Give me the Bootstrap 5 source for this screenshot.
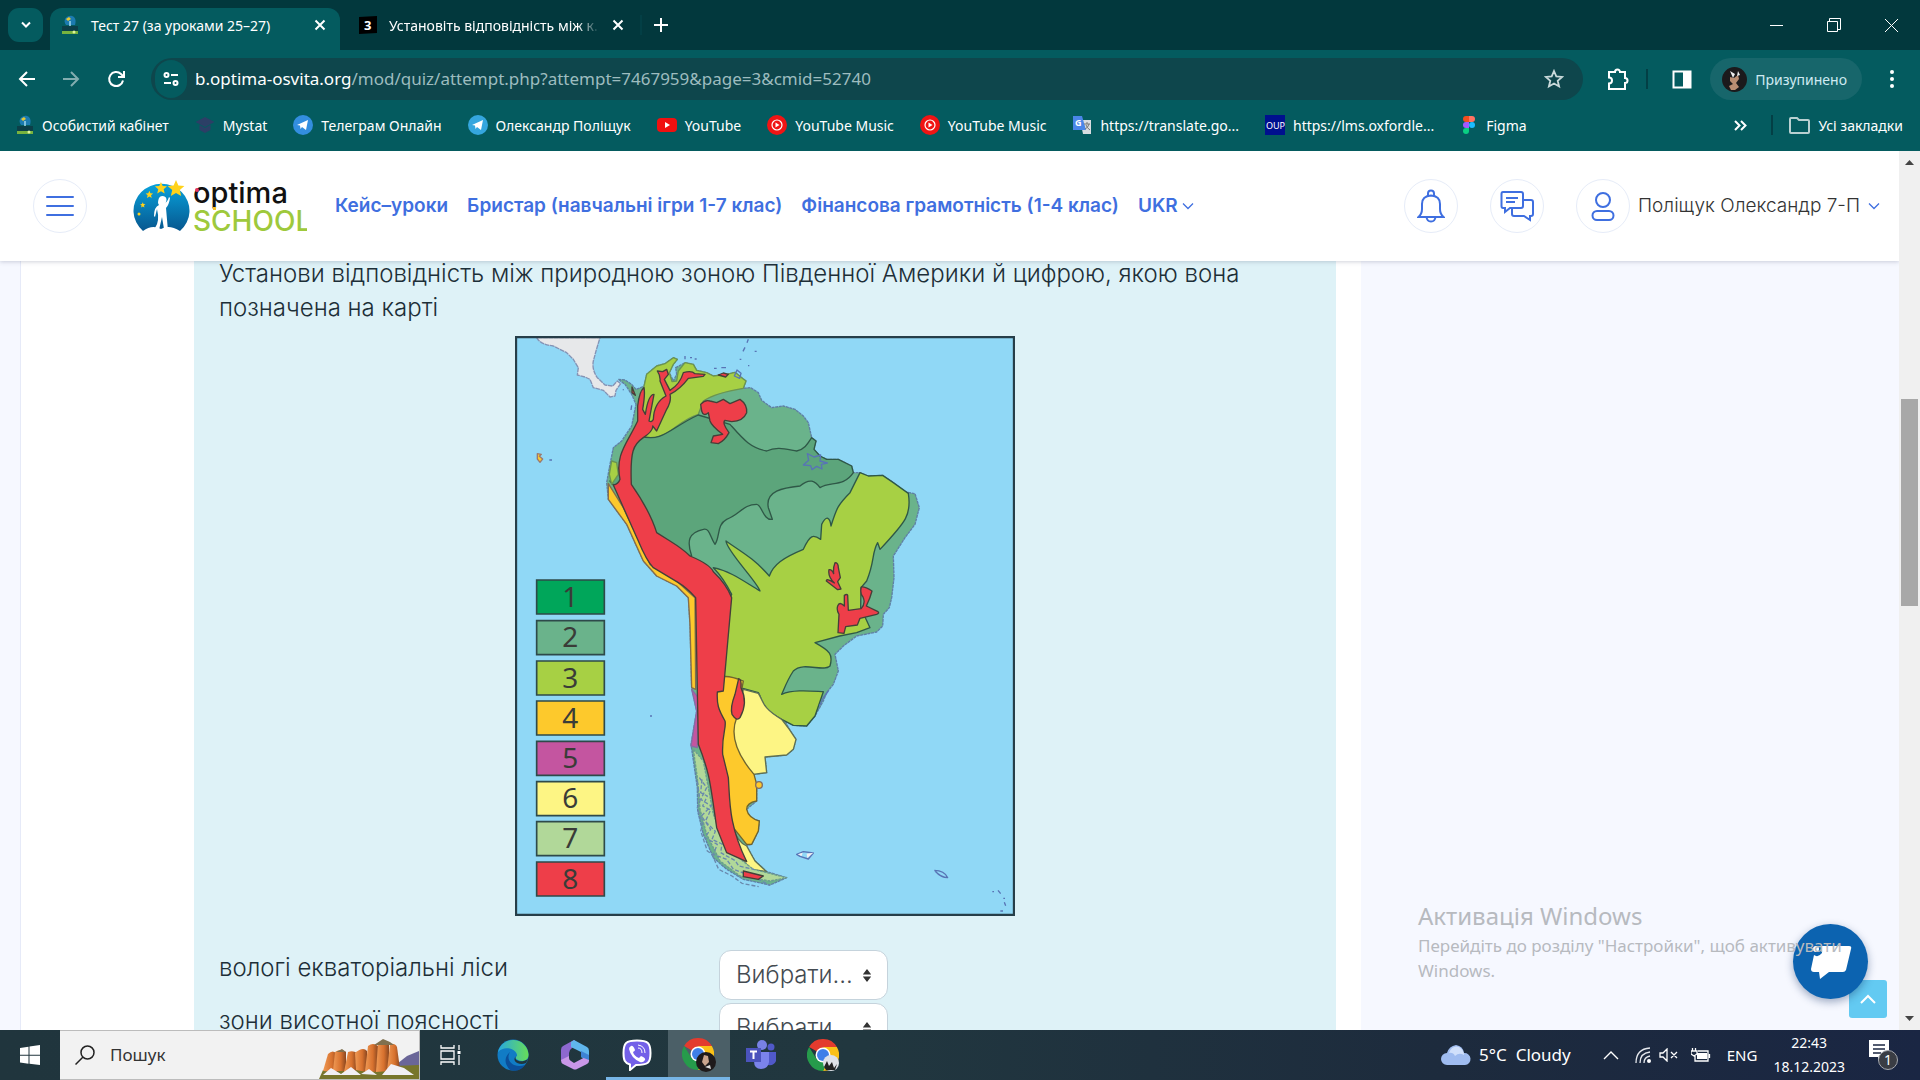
<!DOCTYPE html>
<html lang="uk">
<head>
<meta charset="utf-8">
<meta name="viewport" content="width=device-width, initial-scale=1">
<title>Тест 27 (за уроками 25–27)</title>
<link href="https://cdn.jsdelivr.net/npm/bootstrap@5.3.0/dist/css/bootstrap.min.css" rel="stylesheet">
<style>
:root{--ui:"Noto Sans","Open Sans",sans-serif;--site:Inter,"Noto Sans",sans-serif;--teal:#045b5f;--blue:#3f6fe0}
body{font-family:var(--ui);font-size:14px;background:#f6f8ff;color:#fff}
button{border:0;background:none;padding:0;color:inherit}
a{color:inherit;text-decoration:none}
svg{display:block;flex:none}
.ln{fill:none;stroke:currentColor;stroke-width:2}
.desk{height:100vh;overflow:hidden}
/* browser frame */
.tabstrip{height:50px;background:#02383d;padding-left:8px}
.tabmenu{width:35px;height:34px;border-radius:11px;background:var(--teal)}
.tab-on{width:290px;height:42px;margin-left:7px;border-radius:12px 12px 0 0;background:var(--teal);padding:0 14px 0 11px}
.tab-off{width:300px;height:42px;padding:0 16px 0 19px}
.tab-off .ttl{width:214px;overflow:hidden;-webkit-mask-image:linear-gradient(90deg,#000 90%,transparent)}
.ttl{white-space:nowrap}
.ttl,.bm{font-size:14px}
.winbtns{gap:44px;margin-right:22px}
.toolbar{height:56px;background:var(--teal);padding:2px 18px 0 17px}
.omni{height:42px;border-radius:21px;background:#0e464c;margin-left:24px;padding:0 19px 0 4px}
.url{font-size:17px;color:#9dbcbf;white-space:nowrap}
.url b{font-weight:400;color:#fff}
.site-i{width:32px;height:38px;border-radius:16px;background:var(--teal)}
.prof{height:42px;border-radius:21px;background:#17666b;color:#cfeaf2;padding:0 15px 0 12px;margin:0 20px 0 18px}
.bookmarks{height:45px;background:var(--teal);padding:0 17px 7px 16px}
.bm-list{gap:26px}
.bm{gap:8px;white-space:nowrap}
.sep{width:2px;height:20px;background:#033f45}
/* web page */
.view{min-height:0;background:#f6f8ff}
.site-head{height:110px;background:#fff;box-shadow:0 1px 4px rgba(70,80,110,.25);z-index:2;padding:0 19px 0 33px;font-family:var(--site);color:var(--blue)}
.ring{width:54px;height:54px;border-radius:50%;border:1px solid #e6ecf8}
.logo{margin-left:46px}
.mainnav{font-weight:600;font-size:19px;gap:19px;white-space:nowrap}
.head-tools{gap:32px}
.uname{font-weight:300;font-size:19px;color:#333;white-space:nowrap}
.under{margin-top:-4px;padding-left:20px}
.sheet{background:#fff;border-left:1px solid #e6eaf8;padding:0 25px 0 173px;flex:0 1 1341px}
.quiz{background:#def2f7;color:#1d2f38;font-family:var(--site);font-weight:300;font-size:24px;line-height:34px;padding:0 25px}
.quiz p{max-width:1060px}
.map{width:500px;height:580px;margin:11px auto 0 296px}
.answers{margin-top:34px;width:669px;gap:3px}
.answers label{padding-top:1px}
.pick{appearance:none;width:169px;height:50px;border:1px solid #c5d3dc;border-radius:12px;padding:0 16px;font-family:var(--site);font-weight:300;font-size:24px;color:#444b52;background:#fff url("data:image/svg+xml,%3Csvg xmlns='http://www.w3.org/2000/svg' viewBox='0 0 10 16'%3E%3Cpath fill='%23333' d='M5 1l4.500 6h-9zM5 15l4.500-6h-9z'/%3E%3C/svg%3E") no-repeat right 15px center/10px 15px}
.scroller{width:21px;background:#f0f0f0;z-index:3;padding:8px 0}
.thumb{width:17px;height:207px;background:#a8a8a8;margin-top:234px}
.wmark{right:52px;bottom:47px;width:450px;color:#b7babf;z-index:6;font-size:17px;line-height:25px;white-space:nowrap}
.wmark div{font-size:24px;line-height:34px}
.chat{right:52px;bottom:31px;width:75px;height:75px;border-radius:50%;background:#0c63b0;z-index:5;box-shadow:0 3px 8px rgba(20,50,100,.4)}
.totop{right:33px;bottom:12px;width:38px;height:38px;border-radius:3px;background:#63caf2;z-index:4}
/* taskbar */
.taskbar{height:50px;background:linear-gradient(90deg,#20353d 0,#21373f 45%,#1d2b3d 75%,#1a2643 100%)}
.start{width:60px}
.find{width:360px;background:#f2f2f2;border:1px solid #bcbcbc;border-left:0;color:#333;padding-left:15px}
.find input{border:0;outline:0;background:none;font-size:17px;color:#333;width:190px;margin-left:13px}
.find input::placeholder{color:#333;opacity:1}
.app{width:62px;height:50px;border-bottom:3px solid transparent;padding-top:3px}
.app-live{border-color:#77b5e6}
.app-front{background:#4b5f67}
.tray{font-size:15px}
.weather{font-size:17px}
.clock{font-size:14px;line-height:24px}
.notif{margin:0 22px 0 24px}
</style>
</head>
<body>
<svg width="0" height="0" class="position-absolute" aria-hidden="true">
<defs>
<symbol id="x" viewBox="0 0 12 12"><path class="ln" d="M1.500 1.500l9 9m0-9l-9 9"/></symbol>
<symbol id="fav" viewBox="0 0 18 20"><path fill="#1c7bb0" d="M5 10C1 5 6 0 11 1c4 1 4 6 3 9z"/><path fill="#e4c934" d="M5 4l3-2 2 2-3 2z"/><path fill="#0c3f48" d="M1 11h16v5H1z"/><path fill="#78b23e" d="M1 16h16v3H1z"/><circle cx="13" cy="17" r="1.500" fill="#dff59c"/><path stroke="#9fd9ee" stroke-width="1.500" d="M9 6v5"/></symbol>
<symbol id="tg" viewBox="0 0 20 20"><circle cx="10" cy="10" r="10"/><path fill="#fff" d="M4 10l11-5-2 10-4-3-1.500 2-.500-3.500z"/></symbol>
<symbol id="ytm" viewBox="0 0 20 20"><circle cx="10" cy="10" r="10" fill="#f01414"/><circle cx="10" cy="10" r="5" fill="none" stroke="#fff" stroke-width="1.200"/><path fill="#fff" d="M8.500 7.500v5l4-2.500z"/></symbol>
<symbol id="chev" viewBox="0 0 12 8"><path fill="none" stroke="currentColor" stroke-width="1.300" d="M1 1.500l5 5 5-5"/></symbol>
<symbol id="chrome" viewBox="0 0 32 32"><path fill="#e33b2e" d="M2.140 8A16 16 0 0 1 29.860 8L16 8z M16 16L2.140 8 16 5z"/><path fill="#fbc116" d="M29.860 8A16 16 0 0 1 16 32L22 19 16 8z"/><path fill="#269b4b" d="M16 32A16 16 0 0 1 2.140 8L9.500 20 22 20z"/><circle cx="16" cy="16" r="7.500" fill="#fff"/><circle cx="16" cy="16" r="6" fill="#3f7fe8"/></symbol>
</defs></svg>
<div class="desk d-flex flex-column">
<header>
 <div class="tabstrip d-flex align-items-center">
  <button class="tabmenu d-flex align-items-center justify-content-center" aria-label="Пошук вкладок"><svg width="12" height="8" viewBox="0 0 12 8"><path class="ln" d="M2 1.500l4 4 4-4"/></svg></button>
  <div class="tab-on d-flex align-items-center align-self-end pb-2"><svg width="18" height="20"><use href="#fav"/></svg><span class="ttl ms-2 ps-1 me-auto">Тест 27 (за уроками 25–27)</span><button aria-label="Закрити"><svg width="12" height="12"><use href="#x"/></svg></button></div>
  <div class="tab-off d-flex align-items-center align-self-end pb-2"><svg width="18" height="18" viewBox="0 0 18 18"><path d="M0 1l18-1v17L0 18z"/><text x="5" y="14" fill="#fff" font-weight="700" font-size="13">3</text></svg><span class="ttl ms-2 me-auto ps-1">Установіть відповідність між к.</span><button aria-label="Закрити"><svg width="12" height="12"><use href="#x"/></svg></button></div>
  <span class="sep"></span>
  <button class="ms-2 ps-1" aria-label="Нова вкладка"><svg width="14" height="14" viewBox="0 0 14 14"><path class="ln" d="M7 0v14M0 7h14"/></svg></button>
  <div class="winbtns ms-auto d-flex align-items-center">
   <button aria-label="Згорнути"><svg width="13" height="13" viewBox="0 0 13 13"><path stroke="#fff" d="M0 6.500h13"/></svg></button>
   <button aria-label="Відновити"><svg width="14" height="14" viewBox="0 0 14 14"><path fill="none" stroke="#fff" d="M.5 3.500h10v10H.5zM2.500 3V.5h11v11H11"/></svg></button>
   <button aria-label="Закрити вікно"><svg width="13" height="13" viewBox="0 0 13 13"><path stroke="#fff" d="M0 0l13 13M13 0L0 13"/></svg></button>
  </div>
 </div>
 <div class="toolbar d-flex align-items-center">
  <button aria-label="Назад"><svg width="20" height="20" viewBox="0 0 20 20"><path class="ln" d="M18 10H3M10 3l-7 7 7 7"/></svg></button>
  <button class="ms-4 opacity-50" aria-label="Вперед"><svg width="20" height="20" viewBox="0 0 20 20"><path class="ln" d="M2 10h15M10 3l7 7-7 7"/></svg></button>
  <button class="ms-4" aria-label="Оновити"><svg width="22" height="20" viewBox="0 0 22 20"><path class="ln" d="M18 11.500A7 7 0 1 1 16 5L18.500 7.500M19 2v6h-6"/></svg></button>
  <div class="omni d-flex align-items-center flex-grow-1">
   <span class="site-i d-flex align-items-center justify-content-center"><svg width="16" height="14" viewBox="0 0 16 14"><path class="ln" d="M8 3h7M1 11h7"/><circle class="ln" cx="3.500" cy="3" r="2"/><circle class="ln" cx="12.500" cy="11" r="2"/></svg></span>
   <span class="url ms-2 me-auto"><b>b.optima-osvita.org</b>/mod/quiz/attempt.php?attempt=7467959&amp;page=3&amp;cmid=52740</span>
   <button aria-label="Закладка"><svg width="20" height="20" viewBox="0 0 20 20"><path fill="none" stroke="#c9dadb" stroke-width="1.800" d="M10 2l2.300 5.400 5.900.5-4.500 3.900 1.400 5.700L10 14.500l-5.100 3 1.400-5.700-4.500-3.900 5.900-.5z"/></svg></button>
  </div>
  <button class="ms-4" aria-label="Розширення"><svg width="23" height="24" viewBox="0 0 23 24"><path class="ln" d="M2 5h6a2.500 2.500 0 0 1 5 0h5v6a2.500 2.500 0 0 1 0 5v6H2v-5.500a3 3 0 0 0 0-6z"/></svg></button>
  <span class="sep ms-3 me-4"></span>
  <button aria-label="Бічна панель"><svg width="20" height="19" viewBox="0 0 20 19"><path class="ln" d="M1.500 1.500h17v16h-17z"/><path fill="#fff" d="M11 1h8v17h-8z"/></svg></button>
  <button class="prof d-flex align-items-center"><svg width="25" height="25" viewBox="0 0 25 25"><circle cx="12.500" cy="12.500" r="12.500" fill="#1b1a1c"/><path fill="#b98d72" d="M8 10l4 1 4-3 1 4-3 4 3 4-4 3H9l-2-4 4-2-3-3z"/><path fill="#eee" d="M8 4l5 3-2 4zM16 4l2 4-3 1z"/></svg><span class="ms-2">Призупинено</span></button>
  <button aria-label="Меню"><svg width="20" height="20" viewBox="0 0 20 20" fill="#fff"><circle cx="10" cy="3" r="2"/><circle cx="10" cy="10" r="2"/><circle cx="10" cy="17" r="2"/></svg></button>
 </div>
 <nav class="bookmarks d-flex align-items-center justify-content-between" aria-label="Закладки">
  <div class="bm-list d-flex">
  <a class="bm d-flex align-items-center" href="#"><svg width="18" height="20"><use href="#fav"/></svg>Особистий кабінет</a>
  <a class="bm d-flex align-items-center" href="#"><svg width="20" height="18" viewBox="0 0 19 18"><path fill="#2c3f66" d="M0 6l9.500-5L19 6l-9.500 5zM4 9v5l5.500 3 5.500-3V9l-5.500 3z"/></svg>Mystat</a>
  <a class="bm d-flex align-items-center" href="#"><svg width="20" height="20" fill="#338edf"><use href="#tg"/></svg>Телеграм Онлайн</a>
  <a class="bm d-flex align-items-center" href="#"><svg width="20" height="20" fill="#35a6de"><use href="#tg"/></svg>Олександр Поліщук</a>
  <a class="bm d-flex align-items-center" href="#"><svg width="20" height="14" viewBox="0 0 20 14"><rect width="20" height="14" rx="4" fill="#f01010"/><path fill="#fff" d="M8 4v6l5-3z"/></svg>YouTube</a>
  <a class="bm d-flex align-items-center" href="#"><svg width="20" height="20"><use href="#ytm"/></svg>YouTube Music</a>
  <a class="bm d-flex align-items-center" href="#"><svg width="20" height="20"><use href="#ytm"/></svg>YouTube Music</a>
  <a class="bm d-flex align-items-center" href="#"><svg width="20" height="20" viewBox="0 0 20 20"><path fill="#d8dce0" d="M8 5h11v14h-8z"/><path fill="#4a86e8" d="M1 1h9l4 14H1z"/><path stroke="#777" d="M12 9h6m-3-2v2m2 0q-1 4-4 5m1-4q1 3 4 5" fill="none"/><text x="3" y="11" font-size="9" font-weight="700" fill="#fff">G</text></svg>https://translate.go...</a>
  <a class="bm d-flex align-items-center" href="#"><svg width="20" height="20" viewBox="0 0 20 20"><path fill="#00108e" d="M0 0h20v20H0z"/><text x="1" y="14" font-size="9" fill="#fff">OUP</text></svg>https://lms.oxfordle...</a>
  <a class="bm d-flex align-items-center" href="#"><svg width="18" height="20" viewBox="0 0 18 20"><path fill="#f24e1e" d="M9 1H6a3 3 0 0 0 0 6h3z"/><path fill="#ff7262" d="M9 1h3a3 3 0 0 1 0 6H9z"/><path fill="#a259ff" d="M9 7H6a3 3 0 0 0 0 6h3z"/><circle cx="12" cy="10" r="3" fill="#1abcfe"/><path fill="#0acf83" d="M9 13H6a3 3 0 1 0 3 3z"/></svg>Figma</a>
  </div>
  <div class="d-flex align-items-center"><button aria-label="Більше закладок"><svg width="13" height="11" viewBox="0 0 13 11"><path class="ln" d="M1 1l4.500 4.500L1 10M7 1l4.500 4.500L7 10"/></svg></button><span class="sep ms-4 me-3"></span><a class="bm d-flex align-items-center" href="#"><svg width="21" height="17" viewBox="0 0 21 17"><path fill="none" stroke="#b9d0d1" stroke-width="2" d="M1 2q0-1 1-1h6l2 2h9q1 0 1 1v11q0 1-1 1H2q-1 0-1-1z"/></svg>Усі закладки</a></div>
 </nav>
</header>
<div class="view d-flex flex-grow-1 position-relative overflow-hidden">
 <div class="flex-grow-1 d-flex flex-column overflow-hidden">
  <header class="site-head d-flex align-items-center flex-shrink-0 position-relative">
   <button class="ring d-flex align-items-center justify-content-center" aria-label="Меню сайту"><svg width="28" height="22" viewBox="0 0 28 22"><path class="ln" stroke-linecap="round" d="M1 2h26M1 11h26M1 20h26"/></svg></button>
   <a href="#" class="logo" aria-label="Optima School"><svg width="174" height="68" viewBox="0 -4 174 68"><defs><linearGradient id="lg" x1="0" y1="0" x2="0" y2="1"><stop stop-color="#08a2dc"/><stop offset="1" stop-color="#07578f"/></linearGradient></defs><path fill="url(#lg)" d="M10 55A28 27 0 1 1 47 55Q36 48 28 53 19 48 10 55z"/><g fill="#ffd21a"><path id="st" d="M43 4l2.400 5.600 6 .5-4.600 4 1.400 6-5.200-3.200-5.200 3.200 1.400-6-4.600-4 6-.5z"/><use href="#st" transform="translate(-3 3)scale(.72)"/><use href="#st" transform="translate(-3 13)scale(.45)"/><use href="#st" transform="translate(-4 25)scale(.32)"/><circle cx="6" cy="38" r="1.500"/></g><path fill="#fff" d="M26 22a4 4 0 1 1 3 6q5 0 7-7l1 1q-1 7-4 10l2 23-4-2-2-12-3 13-4-2q5-7 2-19l-2 8-1-1q0-9 5-11-2-2 0-7z"/><g font-family="Inter,sans-serif"><text x="60" y="27" font-size="29" font-weight="500" fill="#111">optima</text><text x="60" y="55" font-size="28" font-weight="500" fill="#9ec93c">SCHOOL</text></g><circle cx="64" cy="14" r="2" fill="#e5325d"/><path fill="#f4bf24" d="M80 31h3v3h-3z"/></svg></a>
   <nav class="mainnav d-flex align-items-center ms-4 ps-1 me-auto"><a href="#">Кейс–уроки</a><a href="#">Бристар (навчальні ігри 1-7 клас)</a><a href="#">Фінансова грамотність (1-4 клас)</a><a href="#" class="d-flex align-items-center gap-1">UKR <svg width="12" height="8"><use href="#chev"/></svg></a></nav>
   <div class="head-tools d-flex align-items-center">
   <button class="ring d-flex align-items-center justify-content-center" aria-label="Сповіщення"><svg width="28" height="34" viewBox="0 0 28 34"><path class="ln" d="M1.500 28H26.500Q23 25 23 20v-5Q23 7 14 6.500 5 7 5 15v5q0 5-3.500 8zM11 7V4.500a3 3 0 0 1 6 0V7M9.500 28q.5 4.500 4.500 4.500t4.500-4.500"/></svg></button>
   <button class="ring d-flex align-items-center justify-content-center" aria-label="Повідомлення"><svg width="34" height="32" viewBox="0 0 34 32"><path class="ln" d="M3 2h18q2 0 2 2v12q0 2-2 2H10l-5 4v-4H3q-1.500 0-1.500-2V4Q1.500 2 3 2zM6 8h12M6 12h9M23 10h8q2 0 2 2v12q0 2-2 2h-1v4l-6-4H14q-2 0-2-2v-6"/></svg></button>
   <div class="d-flex align-items-center"><button class="ring d-flex align-items-center justify-content-center" aria-label="Профіль"><svg width="24" height="31" viewBox="0 0 24 31"><circle class="ln" cx="12" cy="9" r="7"/><rect class="ln" x="1.500" y="20" width="21" height="9" rx="4.500"/></svg></button>
   <a href="#" class="uname ms-2">Поліщук Олександр 7-П</a><svg class="ms-2" width="12" height="8"><use href="#chev"/></svg></div>
   </div>
  </header>
  <div class="under d-flex">
   <main class="sheet">
    <section class="quiz">
     <p class="mb-0">Установи відповідність між природною зоною Південної Америки й цифрою, якою вона позначена на карті</p>
     <svg class="map" viewBox="15 15 1500 1740" preserveAspectRatio="none" role="img" aria-label="Карта природних зон Південної Америки">
      <path fill="#90d8f6" d="M15 15h1500v1740H15z"/>
      <g stroke-linejoin="round" stroke-width="4">
      <path fill="#e7e8ea" stroke="#8493b5" stroke-dasharray="14 2" d="M80 20Q90 40 130 45L170 65 190 85 205 110 202 132 225 138 240 145 250 170 280 178 300 198 315 195 318 178 332 158 322 150 308 165 285 162 262 140Q245 115 250 90L258 60 270 20z"/>
      <path id="land" fill="#6ab38b" stroke="#5f7fa5" stroke-dasharray="9 2" d="M325 145L345 147 365 160 378 175 402 166 410 130 440 105 465 98 490 80 502 85 490 100 478 125 490 150 500 130 497 110 525 95 550 100 560 118 590 125 610 135 650 130 675 124 695 140 708 150 700 172 722 170 745 185 755 208 785 230 820 225 855 235 880 255 895 275 905 320 918 330 912 355 930 375 950 385 985 385 1025 405 1030 425 1050 425 1075 435 1118 433 1150 455 1185 483 1215 488 1228 530 1215 580 1185 620 1150 675 1152 740 1145 800 1138 830 1120 850 1118 885 1100 903 1040 915 1000 945 975 970 985 1020 970 1060 950 1085 940 1110 915 1155 890 1185 850 1183 825 1170 838 1195 858 1225 850 1255 830 1272 765 1278 770 1325 730 1330 740 1360 740 1410 710 1435 715 1460 748 1470 745 1500 725 1540 710 1545 735 1590 770 1622 830 1640 780 1662 700 1645 650 1615 610 1580 580 1510 563 1440 562 1370 543 1240 560 1140 545 1070 540 880 535 800 500 765 440 735 400 690 350 580 295 505 290 455 300 400 310 350 335 330 365 285 378 220 365 190 345 160z"/>
      <path fill="#a7d044" stroke="#6b9550" d="M402 166L410 130 440 105 465 98 490 80 502 85 490 100 478 125 486 152 500 150 505 120 525 95 550 100 560 118 590 125 610 135 650 130 675 124 695 140 708 150 700 172C650 180 610 190 580 210L565 250C500 270 480 320 420 322L390 315z"/>
      <path fill="#5ca57b" stroke="#2f5847" d="M390 315C460 335 480 290 565 252L660 280C700 325 720 350 770 360 800 345 830 355 860 360 885 355 895 335 905 320L918 330 912 355 930 375 950 385 985 385 1025 405 1030 425C1000 470 960 450 930 470 915 450 900 440 870 465 820 470 765 480 775 530L787 565C760 570 755 520 740 520 700 520 690 550 650 565 620 580 630 620 615 640 600 620 600 590 580 595 535 605 530 630 545 675L500 680 300 450z"/>
      <path fill="#a7d044" stroke="#2f5847" d="M1050 425L1075 435 1118 433 1150 455 1195 487C1205 550 1190 570 1110 655L1103 635C1085 665 1095 690 1070 750L1053 770 1052 830 1080 890 1040 905 989 915 915 935C960 960 970 970 960 1005 940 1025 880 990 850 1020 830 1050 820 1080 815 1090 850 1075 900 1080 940 1082L915 1155 890 1185 850 1183 815 1165C750 1130 760 1110 745 1085L690 1070 620 1035 630 870 665 790Q640 740 610 710C660 720 700 750 750 780 740 750 650 660 648 630 690 660 730 680 778 735 790 700 820 680 880 655 900 610 910 610 932 625L935 580C950 550 960 560 963 585 980 530 985 520 1020 485z"/>
      <path fill="#fdf584" stroke="#5d7054" d="M700 1075L745 1087C760 1110 755 1130 815 1165L838 1195 858 1225 850 1255 830 1272 765 1278 770 1325 730 1330C680 1280 665 1230 668 1180z"/>
      <path fill="#fdc92c" stroke="#6f6530" d="M640 1037Q660 1034 700 1050L680 1160C660 1210 680 1270 732 1330L740 1360 740 1410Q710 1415 710 1435 715 1460 748 1470L745 1500 725 1540 710 1540 670 1490 630 1300 610 1080z"/>
      <circle cx="747" cy="1362" r="10" fill="#fdc92c" stroke="#806d62"/>
      <path fill="#fdf584" stroke="#5d7054" d="M667 1490Q685 1535 710 1545L735 1590 770 1622 725 1615 690 1580z"/>
      <path fill="#a7d044" stroke="#6b9550" d="M305 390L320 395 325 430 305 460 298 430z"/>
      <path fill="#fdc92c" stroke="#856d4a" d="M295 458L340 530 420 700 500 750 555 800 557 1075 545 1070 540 880 535 800 500 765 440 735 400 690 350 580 295 505z"/>
      <path fill="#c455a0" stroke="#856da5" d="M545 1075L565 1100 562 1250 543 1245 560 1140z"/>
      <path fill="#b1d899" stroke="#6b9c90" stroke-dasharray="8 3" d="M550 1255L580 1290 610 1450 660 1560 730 1615 830 1640 780 1650 690 1635 630 1590 590 1510 570 1435 562 1340z"/>
      <path fill="none" stroke="#6989ad" stroke-dasharray="12 6" d="M568 1340l22 30-18 35 32 20-30 30 28 40-18 25 38 20-12 30 40 15 20 30 50 18 60 30M562 1350l8 60-8 20 16 50-6 20 20 60 14 10 20 45 40 20 30 22 50 10M576 1345l-4 40 20 10-14 30 24 12-16 34 30 30-10 24 30 14-4 26 44 24 10 16 46 10"/>
      <g fill="#ee3e49" stroke="#454039">
      <path d="M310 462Q325 460 330 445C315 370 350 340 383 270L383 225Q388 180 402 170 406 190 398 235L406 250Q415 190 432 190L417 270Q425 275 430 265 432 215 468 195L450 150Q452 135 442 120L458 122 470 115 475 130 463 145 480 178Q510 160 520 125 545 118 555 128L585 130 580 136 535 142Q510 175 480 190 485 210 470 235L440 300 428 285Q430 300 400 320C370 340 360 360 364 460Q420 540 440 605L480 630Q520 655 540 675 600 700 610 722 650 760 665 800L640 1080 622 1083C620 1120 625 1135 645 1170 650 1190 635 1210 638 1270L655 1340C660 1410 655 1480 710 1592L650 1565 620 1490C600 1350 600 1330 565 1240L557 800Q530 770 505 755L430 710Q410 690 385 630z"/>
      <path d="M572 220Q585 205 600 210L620 215 640 205 660 218 690 205Q712 220 710 245 700 270 665 272L645 268Q635 275 657 305 645 328 625 338L603 335 610 315 638 310Q605 285 600 270L595 245Q580 258 575 240z"/>
      <path d="M686 1043Q695 1045 693 1070 715 1115 690 1160 680 1172 666 1150 660 1130 675 1090z"/>
      <path d="M625 132l15-6 15 4-8 8zM975 695q10 0 10 15l6 30-8 12 10 22-10 2-34-26q0-10 24 6-20-20-16-40 8-2 14 12-2-18 4-33zM983 825q5-15 20 0l0-32q8-5 10 0l2 45 38-5q15-15 6-35-10-10-5-30 10-2 32 12-5 20-17 45l35 17q5 5-4 8l-50 12-8 20-35 5-5 20-18-2 3-55q-8-12-4-25z"/>
      <path d="M700 1620L760 1635 745 1645 700 1637zM366 168l10 25-10-8z"/>
      </g>
      <path fill="none" stroke="#5874b5" d="M525 75v10m15-5h6m8 4h6m52 28h8m14-2h14m25 25l8-18 12 10-4 15zM715 25l-4 10m-6 14l-6 12m-10 24h5m40-24h6m-26 43h4M880 402l16-14-4-20 20 10 20-6-2 18 22 6-18 4 2 14-16-8-14 10-4-12zM118 387h8M420 1155h6M860 1570l20-8 30 4-15 18-25-8zM1273 1618q30 0 40 22-20 0-38-20M1447 1682h5m12-4l8 10m8 14h5m-2 12l4 10m-16 16h8M955 1080l-15 20-12 25M340 175v3m25 45l-2 14"/>
      <path fill="#f0eef2" d="M863 1570l15-5-3 10zM890 1568l20-3-18 16z"/>
      <path fill="#fdc92c" stroke="#9a7a70" d="M82 368l12 2-6 6 10 8-8 10-8-10z"/>
      </g>
      <path fill="none" stroke="#263e49" stroke-width="7" d="M18 18h1494v1734H18z"/>
      <g stroke="#2e4a4a" stroke-width="5">
       <path fill="#00a65a" d="M80 747h203v102H80z"/><path fill="#6ab38b" d="M80 869h203v102H80z"/><path fill="#a7d044" d="M80 990h203v102H80z"/><path fill="#fdc92c" d="M80 1110h203v102H80z"/><path fill="#c455a0" d="M80 1231h203v102H80z"/><path fill="#fdf584" d="M80 1352h203v102H80z"/><path fill="#b1d899" d="M80 1472h203v102H80z"/><path fill="#ee3e49" d="M80 1593h203v102H80z"/>
      </g>
      <g font-family="Noto Sans,sans-serif" font-weight="400" font-size="84" fill="#3a3c38" text-anchor="middle"><text x="181" y="828">1</text><text x="181" y="949">2</text><text x="181" y="1071">3</text><text x="181" y="1190">4</text><text x="181" y="1311">5</text><text x="181" y="1430">6</text><text x="181" y="1551">7</text><text x="181" y="1675">8</text></g>
     </svg>
     <div class="answers d-flex flex-column">
      <div class="d-flex justify-content-between"><label for="a1">вологі екваторіальні ліси</label><select id="a1" class="pick"><option>Вибрати...</option></select></div>
      <div class="d-flex justify-content-between"><label for="a2">зони висотної поясності</label><select id="a2" class="pick"><option>Вибрати...</option></select></div>
     </div>
    </section>
   </main>
  </div>
 </div>
 <div class="scroller d-flex flex-column align-items-center"><svg width="9" height="6" viewBox="0 0 9 6"><path fill="#444" d="M0 6l4.500-5L9 6z"/></svg><span class="thumb"></span><svg class="mt-auto" width="9" height="6" viewBox="0 0 9 6"><path fill="#444" d="M0 0l4.500 5L9 0z"/></svg></div>
 <button class="totop position-absolute d-flex align-items-center justify-content-center" aria-label="Нагору"><svg width="16" height="10" viewBox="0 0 16 10"><path class="ln" d="M1 9l7-7 7 7"/></svg></button>
 <button class="chat position-absolute d-flex align-items-center justify-content-center" aria-label="Чат"><svg width="42" height="36" viewBox="0 0 42 36"><path fill="#fff" d="M12 2h27q3 0 2 3l-5 21q-1 2-3 2H19l-9 7-1-7H4q-3 0-3-3l3-14q4 3 8-2z"/><circle cx="6" cy="5" r="3" fill="#fff"/></svg></button>
 <div class="wmark position-absolute pe-none"><div>Активація Windows</div>Перейдіть до розділу "Настройки", щоб активувати<br>Windows.</div>
</div>
<footer class="taskbar d-flex flex-shrink-0">
 <button class="start d-flex align-items-center justify-content-center" aria-label="Пуск"><svg width="20" height="20" viewBox="0 0 20 20"><path fill="#fff" d="M0 3l8.500-1.300v8H0zM9.500 1.500L20 0v9.700H9.500zM0 10.700h8.500v8L0 17.500zM9.500 10.700H20V20L9.500 18.800z"/></svg></button>
 <div class="find d-flex align-items-center"><svg width="20" height="20" viewBox="0 0 20 20"><circle cx="12.500" cy="7.500" r="6.500" fill="none" stroke="#222" stroke-width="1.500"/><path stroke="#222" stroke-width="1.500" d="M8 12l-7.500 7.500"/></svg><input type="text" placeholder="Пошук" aria-label="Пошук">
 <svg class="ms-auto" width="100" height="48" viewBox="0 0 100 48"><defs><linearGradient id="rk"><stop stop-color="#f09a55"/><stop offset=".6" stop-color="#d7712e"/><stop offset="1" stop-color="#8a4720"/></linearGradient></defs><path fill="#6a6698" d="M74 36l14-11 12-5v28H74z"/><path fill="#77752c" d="M0 48l4-9 45-3 51-2v14z"/><g fill="url(#rk)"><path d="M4 40L9 23q5-5 9 0l1 18z"/><path d="M14 40l2-19q6-4 11 0v19z"/><path d="M25 41l4-20q5-2 9 1l-1 18z"/><path d="M37 39l-1-17q8-7 12-2v21z"/><path d="M46 40l3-25q5-4 10 0v26z"/><path d="M57 41l2-29q6-3 11 0v28z"/><path d="M68 40l3-27q5-1 7 3l3 22z"/></g><path fill="#80704e" d="M17 21l6-3 4 3zM55 14l9-6 7 3 4 3z"/><path fill="#f1eff4" d="M4 44l8-7 10 6 10-7 10 8zM42 43l8-5 8 6zM63 44l9-11 13 4 10 7z"/></svg></div>
 <button class="app d-flex align-items-center justify-content-center" aria-label="Перегляд завдань"><svg width="22" height="22" viewBox="0 0 22 22"><path fill="none" stroke="#fff" stroke-width="1.300" d="M1 1v3h13V1M1 7h13v8H1zM1 21v-3h13v3M19 1v5m0 5v10"/><path fill="#fff" d="M17.500 7h3v3h-3z"/></svg></button>
 <button class="app d-flex align-items-center justify-content-center" aria-label="Edge"><svg width="32" height="32" viewBox="0 0 32 32"><defs><linearGradient id="eg"><stop stop-color="#28a8df"/><stop offset="1" stop-color="#67dd58"/></linearGradient></defs><circle cx="16" cy="16" r="15.500" fill="#117cc5"/><path fill="url(#eg)" d="M1 13A15.500 15.500 0 0 1 31.500 15C32 22 26 23 21 21q-4-2-1-4C21 11 8 5 1 13z"/><path fill="#0b4f9a" d="M13 13c-5 8 3 17 15 13Q22 34 13 31 4 21 13 13z"/><path fill="#20353d" d="M19 17c-3 4 5 8 12 3l-2 4c-7 3-15-2-10-7z"/></svg></button>
 <button class="app d-flex align-items-center justify-content-center" aria-label="Microsoft 365"><svg width="28" height="30" viewBox="0 0 28 30"><path fill="#8d68cf" d="M13 0L2 6Q0 7 0 10v11l8 4V13q0-3 3-5l7-4z"/><path fill="#60b6ed" d="M13 0l13 7q2 1 2 4v10l-8-4v-5L10 7V2z"/><path fill="#c997e8" d="M0 20l8-4v2q0 2 2 3l3 2 15-8v6q0 2-2 3l-10 5q-2 1-4 0L2 24q-2-1-2-4z"/><path fill="#3e83d4" d="M20 11l8 4v5l-8-3z"/></svg></button>
 <button class="app app-live d-flex align-items-center justify-content-center" aria-label="Viber"><svg width="30" height="32" viewBox="0 0 30 32"><path fill="#7360e8" stroke="#fff" stroke-width="2" d="M15 1.500C4 1.500 1.500 4 1.500 14c0 7 1 10 6.500 11.500V31l6-5C26 26 28.500 24 28.500 14S26 1.500 15 1.500z"/><path fill="#fff" d="M9 7q2-1 4 4 0 1-2 2 1 4 6 6l2-2q5 2 4 4-2 3-5 2Q9 19 7 10q0-2 2-3z"/><path fill="none" stroke="#fff" d="M16 6q7 1 7 8M16 9q4 0 4 5"/></svg></button>
 <button class="app app-live app-front d-flex align-items-center justify-content-center" aria-label="Chrome"><svg width="34" height="34" viewBox="0 0 34 34"><use href="#chrome" width="32" height="32"/><circle cx="24" cy="24" r="10" fill="#1e1a1b"/><path fill="#caa58e" d="M22 17l4 1 1 6-4 4-3-4z"/><path fill="#ddd" d="M23 29l5-2 1 4z"/></svg></button>
 <button class="app d-flex align-items-center justify-content-center" aria-label="Teams"><svg width="30" height="30" viewBox="0 0 30 30"><circle cx="16" cy="5" r="5" fill="#7881e5"/><circle cx="25" cy="7" r="3.500" fill="#5059c9"/><path fill="#5059c9" d="M20 12h10v9q-2 5-8 4z"/><path fill="#7b83eb" d="M9 12h14v10q-1 7-8 7t-7-8z"/><path fill="#4b53bc" d="M0 8h15v14H0z"/><path stroke="#fff" stroke-width="2" d="M4 11.500h7M7.500 11v8"/></svg></button>
 <button class="app d-flex align-items-center justify-content-center" aria-label="Chrome, другий профіль"><svg width="32" height="32" viewBox="0 0 32 32"><use href="#chrome"/><circle cx="24" cy="24" r="8" fill="#dfe2e8"/><path fill="#222" d="M17 28l3-6 2 5 3-4 2 6 3-4-2 6h-9z"/></svg></button>
 <div class="tray d-flex align-items-center ms-auto">
  <svg width="30" height="20" viewBox="0 0 30 20"><path fill="#9fbcf0" d="M6 20a6 6 0 0 1 0-12Q8 1 15 0q7 1 8 8a6 6 0 0 1 1 12z"/><path fill="#d0e0fb" d="M8 8q3-8 10-6 5 3 5 8-5-3-9 1-2-4-6-3z"/></svg>
  <span class="weather ms-2 me-4 pe-2">5°C&nbsp; Cloudy</span>
  <svg width="16" height="9" viewBox="0 0 16 9"><path fill="none" stroke="#fff" stroke-width="1.400" d="M1 8l7-7 7 7"/></svg>
  <svg class="ms-3" width="16" height="16" viewBox="0 0 16 16"><path fill="none" stroke="#e6e9ee" stroke-width="1.300" d="M1 16Q1 2 15 1M5 16Q5 6 15 5M9 16q0-6 6-7"/><circle cx="14" cy="14" r="2" fill="#fff"/></svg>
  <svg class="ms-2 me-1" width="20" height="14" viewBox="0 0 20 14"><path fill="none" stroke="#fff" stroke-width="1.300" d="M1 5h3l4-4v12L4 9H1zM12 4l6 6m0-6l-6 6"/></svg>
  <svg class="ms-2" width="20" height="14" viewBox="0 0 20 14"><path fill="none" stroke="#fff" stroke-width="1.300" d="M4 8v5h13V3H7M0 3h6v3L3 8 0 6zM1.500 0v3m3-3v3M18.500 6v4"/><path fill="#fff" d="M6 5h10v6H6z"/></svg>
  <span class="ms-3">ENG</span>
  <div class="clock text-center ms-3">22:43<br>18.12.2023</div>
  <div class="notif"><svg width="29" height="30" viewBox="0 0 29 30"><path fill="#fff" d="M0 0h20v17h-6l-5 4v-4H0z"/><path stroke="#1b2742" stroke-width="1.500" d="M4 5h12M4 9h12M4 13h8"/><circle cx="19" cy="20" r="9.500" fill="#3a3d44" stroke="#a5a8ae"/><text x="15" y="25" font-size="14" fill="#fff">1</text></svg></div>
 </div>
</footer>
</div>
<script src="https://cdn.jsdelivr.net/npm/bootstrap@5.3.0/dist/js/bootstrap.bundle.min.js"></script>
</body>
</html>
